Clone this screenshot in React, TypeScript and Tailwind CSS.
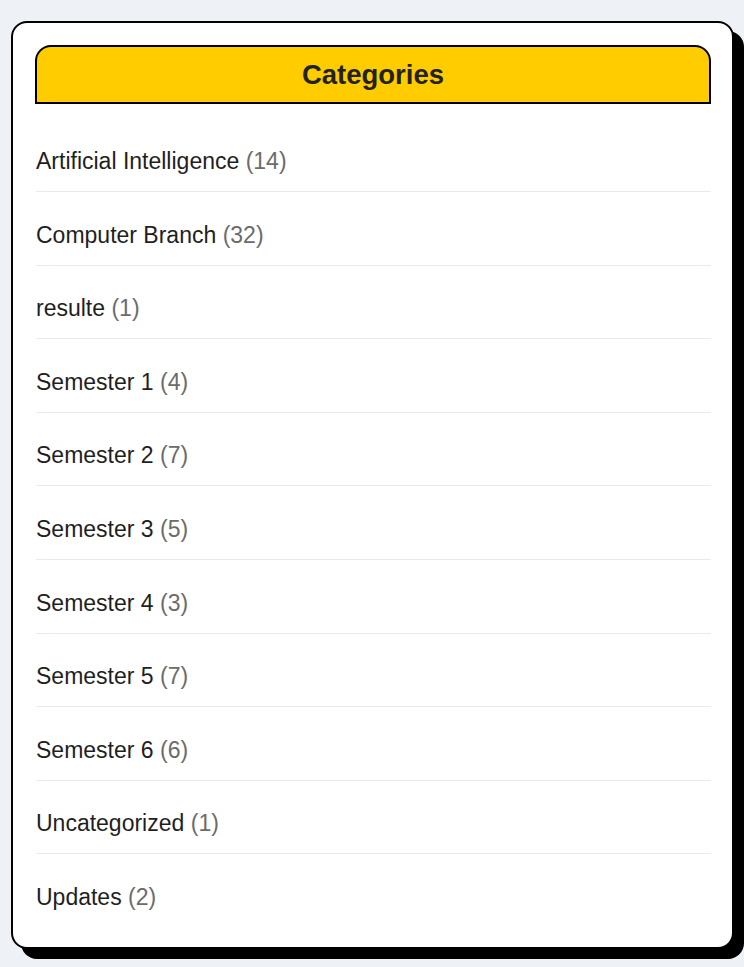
const categories = [
  { name: "Artificial Intelligence", count: 14 },
  { name: "Computer Branch", count: 32 },
  { name: "resulte", count: 1 },
  { name: "Semester 1", count: 4 },
  { name: "Semester 2", count: 7 },
  { name: "Semester 3", count: 5 },
  { name: "Semester 4", count: 3 },
  { name: "Semester 5", count: 7 },
  { name: "Semester 6", count: 6 },
  { name: "Uncategorized", count: 1 },
  { name: "Updates", count: 2 },
]

const App = () => {
  return (
    <main
      className="min-h-screen bg-[#eef1f6] pl-[11px] pr-[10px] pt-[21px] pb-[19px]"
      style={{ fontFamily: '"Liberation Sans", Arial, sans-serif' }}
    >
      <section className="bg-white border-2 border-black rounded-[16px] shadow-[10px_10px_0_#000] pl-[22px] pr-[21px] pt-[22px] pb-[20px]">
        <h2 className="bg-[#ffcc00] border-2 border-black rounded-t-[16px] h-[59px] flex items-center justify-center text-[27.5px] font-bold text-[#222]">
          Categories
        </h2>
        <ul className="mt-[27px] flex flex-col gap-[12.6px] pl-px">
          {categories.map((c, i) => (
            <li
              key={c.name}
              className={`py-[13px] text-[23px] leading-[34px] text-[#1f1f1f] ${
                i < categories.length - 1 ? "border-b border-[#e6ebf2]" : ""
              }`}
            >
              {c.name} <span className="text-[#6b6b6b]">({c.count})</span>
            </li>
          ))}
        </ul>
      </section>
    </main>
  )
}

export default App
